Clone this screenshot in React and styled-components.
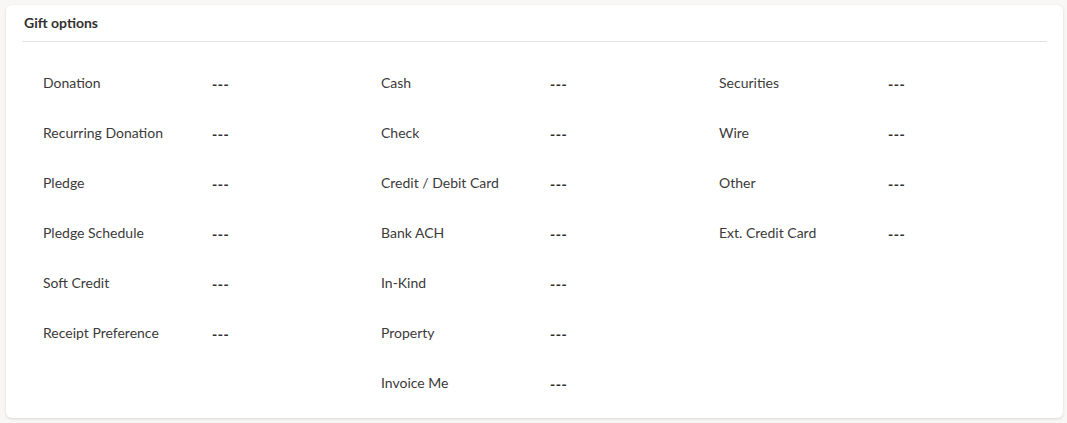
import styled, { createGlobalStyle } from 'styled-components';

const GlobalStyle = createGlobalStyle`
    body {
        margin: 0;
        background: #f8f7f6;
        font-family: "Segoe UI", Lato, "Noto Sans", sans-serif;
        color: #323130;
    }
`
const Page = styled.div`
    padding: 5px 4px 5px 6px;
`
const Card = styled.section`
    background: #ffffff;
    border-radius: 6px;
    box-shadow: 0 1px 3px rgba(0, 0, 0, 0.13);
    padding: 0 16px 11px;
    height: 413px;
    box-sizing: border-box;
`
const CardHeader = styled.h2`
    margin: 0;
    height: 35px;
    display: flex;
    align-items: center;
    padding: 0 0 1px 2px;
    font-size: 14px;
    font-weight: 700;
    border-bottom: 1px solid #e6e4e2;
`
const Columns = styled.div`
    display: grid;
    grid-template-columns: repeat(3, 338px);
    padding: 15px 0 0 21px;
`
const Column = styled.div`
    display: flex;
    flex-direction: column;
`
const Field = styled.div`
    display: flex;
    align-items: center;
    height: 50px;
`
const Label = styled.span`
    width: 169px;
    font-size: 14px;
    color: #3b3a39;
`
const Value = styled.span`
    font-size: 14px;
    font-weight: 900;
    letter-spacing: 0.5px;
    padding-top: 3px;
`

const columns = [
    ['Donation', 'Recurring Donation', 'Pledge', 'Pledge Schedule', 'Soft Credit', 'Receipt Preference'],
    ['Cash', 'Check', 'Credit / Debit Card', 'Bank ACH', 'In-Kind', 'Property', 'Invoice Me'],
    ['Securities', 'Wire', 'Other', 'Ext. Credit Card'],
];

const App = () => {
    return (
        <Page>
            <GlobalStyle />
            <Card>
                <CardHeader>Gift options</CardHeader>
                <Columns>
                    {columns.map((col, i) => (
                        <Column key={i}>
                            {col.map((label) => (
                                <Field key={label}>
                                    <Label>{label}</Label>
                                    <Value>---</Value>
                                </Field>
                            ))}
                        </Column>
                    ))}
                </Columns>
            </Card>
        </Page>
    );
}

export default App;
